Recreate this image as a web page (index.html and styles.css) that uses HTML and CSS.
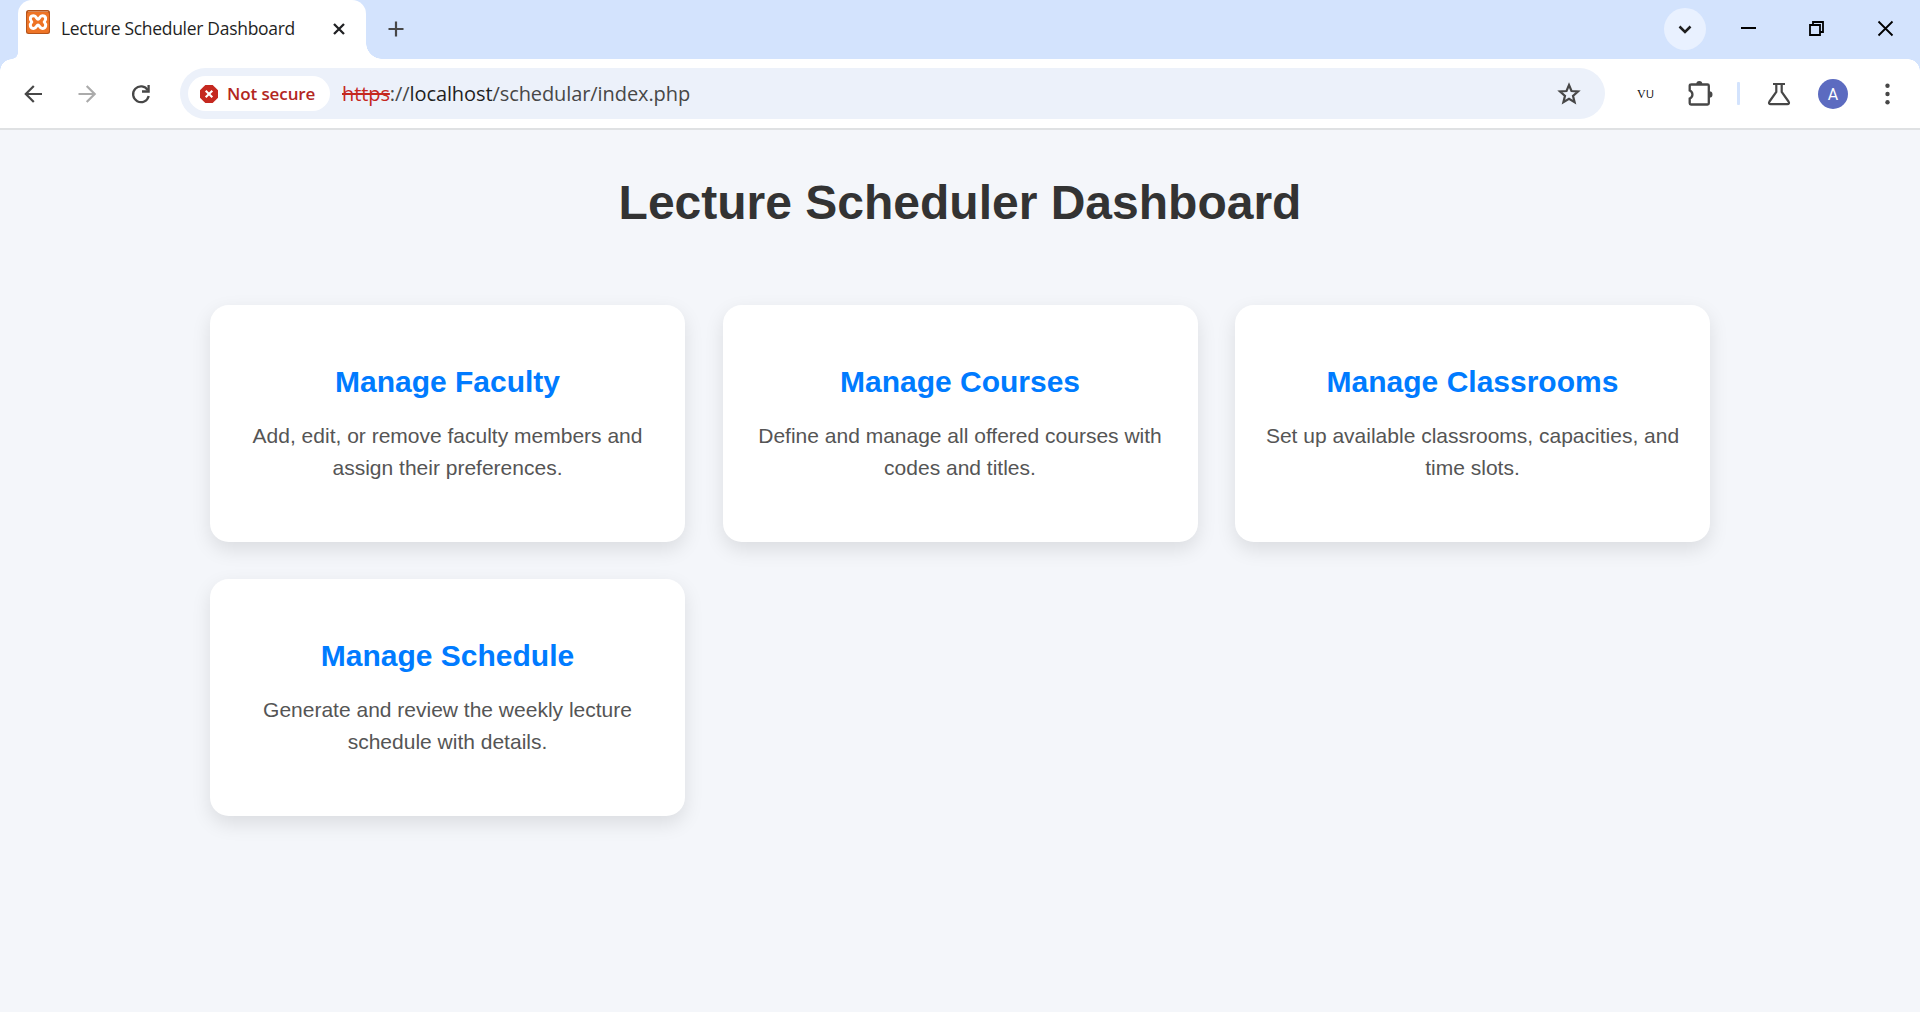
FILE: index.html
```html
<!DOCTYPE html>
<html lang="en">
<head>
<meta charset="utf-8">
<title>Lecture Scheduler Dashboard</title>
<link rel="stylesheet" href="styles.css">
</head>
<body>
<header class="tabstrip">
  <div class="tab">
    <svg class="favicon" width="24" height="24" viewBox="0 0 24 24"><rect width="24" height="24" rx="2.5" fill="#b5531a"/><rect x="1" y="2" width="22" height="21" rx="2" fill="#ee7426"/><path d="M2 1.5h20" stroke="#d58a5b"/><path d="M12 9.300C10.500 9.300 10.500 5.800 7.700 5.800C4 5.800 3.300 9.500 5.800 12C3.300 14.500 4 18.500 7.700 18.500C10.500 18.500 10.500 15 12 15C13.500 15 13.500 18.500 16.300 18.500C20 18.500 20.700 14.500 18.200 12C20.700 9.500 20 5.800 16.300 5.800C13.500 5.800 13.500 9.300 12 9.300z" fill="none" stroke="#fff" stroke-width="3" stroke-linejoin="round"/></svg>
    <span class="tab-title">Lecture Scheduler Dashboard</span>
    <svg class="tab-close" width="12" height="12" viewBox="0 0 12 12"><path d="M1 1l10 10M11 1L1 11" stroke="#202124" stroke-width="2.300"/></svg>
  </div>
  <svg class="new-tab" width="16" height="16" viewBox="0 0 16 16"><path d="M8 .5v15M.5 8h15" stroke="#474747" stroke-width="2.200"/></svg>
  <div class="window-controls">
    <span class="tab-search"><svg width="14" height="9" viewBox="0 0 14 9"><path d="M1.500 1.500L7 7l5.500-5.500" fill="none" stroke="#1f1f1f" stroke-width="2.500"/></svg></span>
    <svg class="minimize" width="15" height="15" viewBox="0 0 15 15"><path d="M0 7h15" stroke="#000" stroke-width="2"/></svg>
    <svg class="restore" width="15" height="15" viewBox="0 0 15 15"><path d="M1 4h10v10H1zM4 4V1h10v10h-3" fill="none" stroke="#000" stroke-width="1.800"/></svg>
    <svg class="close" width="15" height="15" viewBox="0 0 15 15"><path d="M.5.5l14 14M14.500.5l-14 14" stroke="#000" stroke-width="1.800"/></svg>
  </div>
</header>
<nav class="toolbar">
  <svg class="back" width="18" height="18" viewBox="0 0 18 18"><path d="M18 9H2M9.800 1L1.800 9l8 8" fill="none" stroke="#474747" stroke-width="2.200"/></svg>
  <svg class="forward" width="18" height="18" viewBox="0 0 18 18"><path d="M.5 9h16M8.700 1l8 8-8 8" fill="none" stroke="#ababab" stroke-width="2.200"/></svg>
  <svg class="reload" width="20" height="20" viewBox="0 0 20 20"><path d="M16.800 6.200A7.900 7.900 0 1 0 17.700 12" fill="none" stroke="#474747" stroke-width="2.300"/><path d="M17.600 1v6.500H11" fill="none" stroke="#474747" stroke-width="2.300"/></svg>
  <div class="omnibox">
    <span class="chip"><svg width="18" height="18" viewBox="0 0 18 18"><path d="M5.300 0h7.400L18 5.300v7.400L12.700 18H5.300L0 12.700V5.300z" fill="#c5281f"/><path d="M5.700 5.700l6.600 6.600M12.300 5.700l-6.600 6.600" stroke="#fff" stroke-width="2.100"/></svg><span class="chip-text">Not secure</span></span>
    <span class="url"><s>https</s>://<b>localhost</b>/schedular/index.php</span>
    <svg class="star" width="24" height="24" viewBox="0 0 24 24"><path d="M12 3l2.500 6 6.500.5-5 4.300 1.600 6.400-5.600-3.400-5.600 3.400L8 13.800 3 9.500l6.500-.5z" fill="none" stroke="#474747" stroke-width="2.200"/></svg>
  </div>
  <span class="vu"><span>V</span>U</span>
  <svg class="puzzle" width="26" height="26" viewBox="0 0 26 26"><path d="M3.500 3.500h16c.8 0 1.300.5 1.300 1.300v17.400c0 .8-.5 1.300-1.300 1.300H3c-.8 0-1.300-.5-1.300-1.300v-4.700a4.300 4.300 0 0 0 0-8V4.800C1.700 4 2.700 3.500 3.500 3.500z" fill="none" stroke="#474747" stroke-width="2.300"/><path d="M8.300 3a3 3 0 0 1 6 0zM21.300 10.200a3.200 3.200 0 0 1 0 6.400z" fill="#474747"/></svg>
  <span class="divider"></span>
  <svg class="flask" width="24" height="24" viewBox="0 0 24 24"><path d="M6 2h12M9.300 2v8L2.500 19.500c-1 1.500-.3 2.700 1.200 2.700h16.600c1.500 0 2.200-1.200 1.200-2.700L14.700 10V2" fill="none" stroke="#474747" stroke-width="2.200"/></svg>
  <span class="avatar">A</span>
  <svg class="menu" width="5" height="22" viewBox="0 0 5 22"><g fill="#474747"><circle cx="2.500" cy="2.800" r="2.200"/><circle cx="2.500" cy="11" r="2.200"/><circle cx="2.500" cy="19.200" r="2.200"/></g></svg>
</nav>
<main class="page">
  <h1>Lecture Scheduler Dashboard</h1>
  <div class="cards">
    <section class="card"><h2>Manage Faculty</h2><p>Add, edit, or remove faculty members and assign their preferences.</p></section>
    <section class="card"><h2>Manage Courses</h2><p>Define and manage all offered courses with codes and titles.</p></section>
    <section class="card"><h2>Manage Classrooms</h2><p>Set up available classrooms, capacities, and time slots.</p></section>
    <section class="card"><h2>Manage Schedule</h2><p>Generate and review the weekly lecture schedule with details.</p></section>
  </div>
</main>
</body>
</html>
```
FILE: styles.css
```css
* { box-sizing: border-box; }
body { margin: 0; height: 1012px; overflow: hidden; background: #f4f6fa; font-family: "Liberation Sans", Arial, sans-serif; }
svg { display: block; flex: none; overflow: visible; }

/* Tab strip */
.tabstrip { display: flex; height: 59px; padding-left: 18px; background: #d3e3fd; font-family: "Open Sans", sans-serif; }
.tab { position: relative; display: flex; width: 348px; height: 59px; padding-left: 8px; background: #fff; border-radius: 14px 14px 0 0; }
.tab::before, .tab::after { content: ""; position: absolute; bottom: 0; }
.tab::before { left: -6px; width: 6px; height: 6px; background: radial-gradient(circle at 0 0, transparent 5.500px, #fff 6px); }
.tab::after { right: -16px; width: 16px; height: 16px; background: radial-gradient(circle at 100% 0, transparent 15.500px, #fff 16px); }
.favicon { margin-top: 10px; }
.tab-title { flex: none; width: 271px; padding-left: 11px; line-height: 24px; margin-top: 16px; font-size: 17.500px; letter-spacing: -0.3px; color: #1f1f1f; white-space: nowrap; }
.tab-close { margin: 23px 0 0 12px; }
.new-tab { margin: 21px 0 0 22px; }
.window-controls { display: flex; margin-left: auto; padding-right: 27px; }
.tab-search { display: flex; align-items: center; justify-content: center; width: 42px; height: 42px; margin: 8px 35px 0 0; border-radius: 50%; background: #e9f1ff; }
.minimize { margin: 21px 53px 0 0; }
.restore { margin: 21px 54px 0 0; }
.close { margin-top: 21px; }

/* Toolbar */
.toolbar { position: relative; display: flex; align-items: center; height: 71px; padding: 0 30px 0 24px; border-bottom: 2px solid #dfe1e3; background: #fff; font-family: "Open Sans", sans-serif; }
.toolbar::before, .toolbar::after { content: ""; position: absolute; top: 0; width: 12px; height: 12px; }
.toolbar::before { left: 0; background: radial-gradient(circle at 100% 100%, transparent 11.500px, #d3e3fd 12px); }
.toolbar::after { right: 0; background: radial-gradient(circle at 0 100%, transparent 11.500px, #d3e3fd 12px); }
.forward { margin-left: 36px; }
.reload { margin-left: 35px; }
.omnibox { display: flex; align-items: center; width: 1425px; height: 51px; margin-left: 29px; padding: 0 24px 0 8px; border-radius: 26px; background: #ecf1fa; }
.chip { display: flex; align-items: center; width: 142px; height: 35px; padding-left: 12px; border-radius: 18px; background: #fff; }
.chip-text { margin-left: 9px; font-size: 17px; font-weight: 600; line-height: 24px; color: #b3261e; white-space: nowrap; letter-spacing: -0.1px; }
.url { margin-left: 12px; font-size: 20px; line-height: 28px; color: #474747; white-space: nowrap; letter-spacing: -0.09px; }
.url s { color: #c5281f; text-decoration-thickness: 1.500px; }
.url b { font-weight: 400; color: #1f1f1f; }
.star { margin-left: auto; }
.vu { display: flex; align-items: baseline; width: 17px; margin-left: 32px; font: 11.500px/14px "Open Sans", sans-serif; color: #111; }
.vu span { font-family: "Liberation Serif", serif; font-size: 12px; }
.puzzle { margin-left: 34px; }
.divider { width: 3px; height: 23px; margin-left: 23px; background: #d3e3fd; border-radius: 1px; }
.flask { margin-left: 27px; }
.avatar { width: 30px; height: 30px; margin-left: 27px; border-radius: 50%; background: #5c6bc0; color: #fff; font: 16px/31px Roboto, sans-serif; text-align: center; }
.menu { margin-left: auto; }

/* Dashboard */
.page { padding: 44px 210px 0; }
h1 { margin: 0 0 73px; font-size: 48px; line-height: 58px; text-align: center; color: #333; }
.cards { display: grid; grid-template-columns: repeat(3, 475px); grid-auto-rows: 236.700px; gap: 37.500px; }
.card { padding: 60px 25px 0; border-radius: 18.750px; background: #fff; box-shadow: 0 7.500px 18.750px rgba(0, 0, 0, 0.1); text-align: center; }
h2 { margin: 0 0 21px; font-size: 30px; line-height: 34px; color: #007bff; }
p { margin: 0; font-size: 21px; line-height: 32px; color: #555; }
```
